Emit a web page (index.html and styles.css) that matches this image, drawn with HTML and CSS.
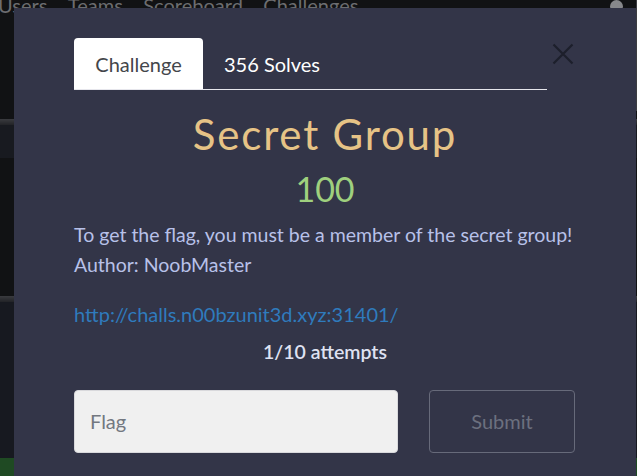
FILE: index.html
```html
<!DOCTYPE html>
<html>
<head>
<meta charset="utf-8">
<link rel="stylesheet" href="styles.css">
</head>
<body>
<div class="page">
  <nav class="topnav">
    <span class="nav-item">Users</span>
    <span class="nav-item">Teams</span>
    <span class="nav-item">Scoreboard</span>
    <span class="nav-item">Challenges</span>
    <span class="avatar"></span>
  </nav>
  <div class="bg-line"></div>
  <div class="bg-card1"></div>
  <div class="bg-gap"></div>
  <div class="bg-line"></div>
  <div class="bg-card2"></div>
  <div class="bg-green"></div>
  <div class="scroll-thumb"></div>
</div>

<div class="modal">
  <div class="modal-head">
    <ul class="tabs">
      <li class="tab active">Challenge</li>
      <li class="tab">356 Solves</li>
    </ul>
    <button class="close" aria-label="Close">
      <svg width="22" height="22" viewBox="0 0 22 22"><path d="M1.5 1.5 L20.5 20.5 M20.5 1.5 L1.5 20.5" stroke="#1d1f2b" stroke-width="2.2" fill="none"/></svg>
    </button>
  </div>
  <div class="modal-body">
    <h2 class="title">Secret Group</h2>
    <h3 class="value">100</h3>
    <p class="desc">To get the flag, you must be a member of the secret group!<br>Author: NoobMaster</p>
    <a class="link" href="#">http://challs.n00bzunit3d.xyz:31401/</a>
    <p class="attempts">1/10 attempts</p>
    <div class="submit-row">
      <input class="flag-input" type="text" placeholder="Flag">
      <button class="submit-btn">Submit</button>
    </div>
  </div>
</div>
</body>
</html>
```

FILE: styles.css
```css
* { box-sizing: border-box; }
html, body { margin: 0; padding: 0; }
body {
  width: 637px;
  height: 476px;
  overflow: hidden;
  background: #111214;
  font-family: Lato, "Open Sans", sans-serif;
  position: relative;
}
.page { width: 637px; position: relative; }
.topnav {
  height: 126px;
  margin-top: -7px;
  margin-left: -2px;
  display: flex;
  align-items: flex-start;
  color: #6c6d70;
  font-size: 20px;
  line-height: 24px;
  position: relative;
}
.nav-item { margin-right: 20.5px; }
.avatar {
  position: absolute;
  left: 612px;
  top: 7px;
  width: 13px;
  height: 13px;
  border-radius: 50%;
  background: #87888b;
}
.bg-line { height: 6px; background: linear-gradient(#3a3b3f, #222327); }
.bg-card1 { height: 33px; background: #181a20; }
.bg-gap { height: 138px; background: #111214; }
.bg-card2 { height: 156px; background: #171920; }
.bg-green { height: 30px; background: #1f4a23; }
.scroll-thumb {
  position: absolute;
  right: 0;
  top: 0;
  width: 1px;
  height: 118px;
  background: #3c3d41;
}

.modal {
  position: absolute;
  left: 14px;
  top: 8px;
  width: 622px;
  height: 480px;
  background: #333548;
  padding: 30px 60px 0 60px;
}
.modal-head {
  display: flex;
  align-items: flex-start;
  width: 502px;
}
.tabs {
  list-style: none;
  margin: 0;
  padding: 0;
  display: flex;
  flex: 0 0 473px;
  border-bottom: 1px solid #e6e6ec;
}
.tab {
  height: 51px;
  padding: 0 21px;
  display: flex;
  align-items: center;
  font-size: 20px;
  line-height: 24px;
  color: #ffffff;
}
.tab.active {
  background: #ffffff;
  color: #43464b;
  border-radius: 4px 4px 0 0;
  width: 129px;
  justify-content: center;
  padding: 0;
}
.close {
  background: none;
  border: 0;
  padding: 0;
  margin: 5px 0 0 5px;
  width: 22px;
  height: 22px;
  display: block;
}
.close svg { display: block; }
.modal-body { width: 502px; }
.title {
  margin: 19px 0 0 0;
  text-align: center;
  font-weight: 400;
  font-size: 42px;
  line-height: 50px;
  letter-spacing: 1.8px;
  color: #e6c386;
}
.value {
  margin: 9.5px 0 0 0;
  text-align: center;
  font-weight: 400;
  font-size: 34px;
  line-height: 40px;
  color: #9fd07e;
}
.desc {
  margin: 11px 0 0 0;
  font-size: 19.5px;
  line-height: 30px;
  color: #b8c1e9;
}
.link {
  display: inline-block;
  margin-top: 20px;
  font-size: 20px;
  line-height: 28px;
  color: #2f7bbd;
  text-decoration: none;
}
.attempts {
  margin: 10.5px 0 0 0;
  text-align: center;
  font-size: 19.5px;
  line-height: 28px;
  font-weight: 600;
  color: #dfe2f2;
}
.submit-row {
  margin-top: 23.5px;
  display: grid;
  grid-template-columns: 324px 146px;
  column-gap: 31px;
}
.flag-input {
  height: 63px;
  background: #f0f0f0;
  border: 1px solid #d9d9dc;
  border-radius: 4px;
  padding: 0 15px;
  font-family: Lato, sans-serif;
  font-size: 20px;
  color: #495057;
}
.flag-input::placeholder { color: #737880; }
.submit-btn {
  height: 63px;
  background: transparent;
  border: 1px solid #676a7a;
  border-radius: 4px;
  font-family: Lato, sans-serif;
  font-size: 20px;
  color: #6c707f;
}
```
